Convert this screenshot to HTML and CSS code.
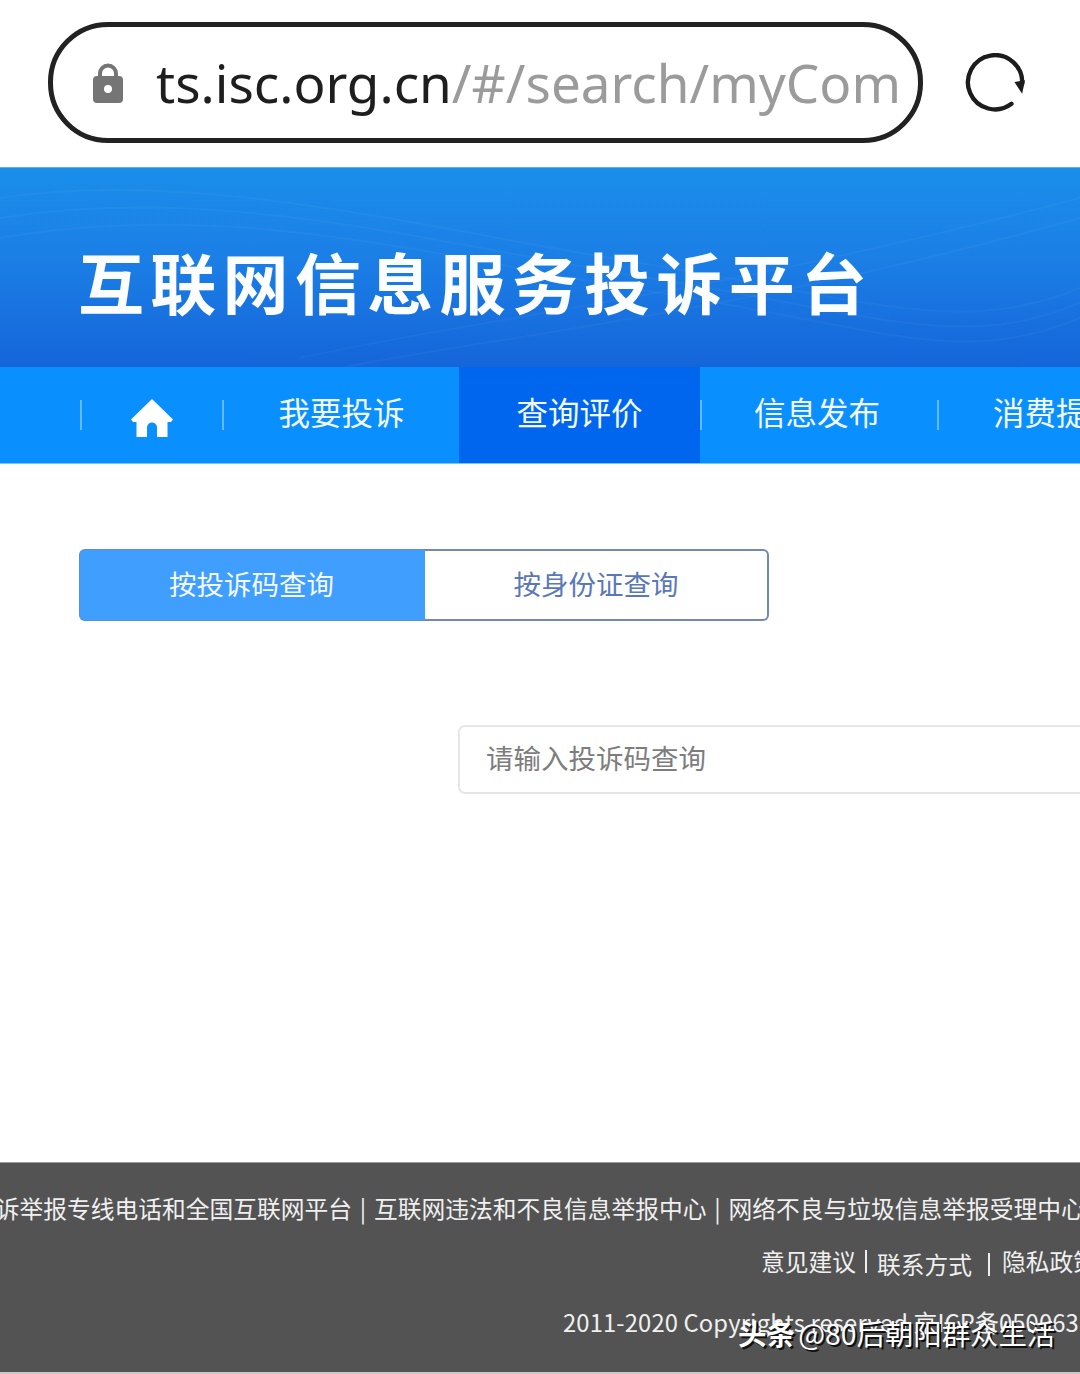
FILE: index.html
```html
<!DOCTYPE html>
<html lang="zh-CN">
<head>
<meta charset="utf-8">
<title>互联网信息服务投诉平台</title>
<link rel="stylesheet" href="styles.css">
</head>
<body>
<div class="page">
  <header class="browser">
    <div class="address">
      <svg class="lock" viewBox="0 0 30 40" aria-hidden="true">
        <path class="lock-arc" d="M7 17V10.500a8 8 0 0 1 16 0V17"/>
        <path class="lock-body" fill-rule="evenodd" d="M4 13h22a4 4 0 0 1 4 4v19a4 4 0 0 1-4 4H4a4 4 0 0 1-4-4V17a4 4 0 0 1 4-4zM15 22a4 4 0 1 0 0 8 4 4 0 0 0 0-8z"/>
      </svg>
      <div class="url"><span class="host">ts.isc.org.cn</span><span class="path">/#/search/myCom</span></div>
    </div>
    <svg class="reload" viewBox="0 0 64 64" aria-hidden="true">
      <path class="reload-arc" d="M49 52.500A28 28 0 1 1 60 32"/>
      <path class="reload-head" d="M52 30L63 28L60 42Z"/>
    </svg>
  </header>

  <section class="banner">
    <svg class="waves" viewBox="0 0 1080 200" preserveAspectRatio="none" aria-hidden="true">
      <path d="M0 30C200 0 420 60 640 95S960 170 1080 120"/>
      <path d="M0 50C220 15 430 75 650 110S960 185 1080 135"/>
      <path d="M0 70C240 30 440 90 660 125S960 200 1080 150"/>
      <path d="M300 190C480 150 700 130 1080 30"/>
      <path d="M340 200C520 165 740 145 1080 50"/>
    </svg>
    <h1 class="title">互联网信息服务投诉平台</h1>
  </section>

  <nav class="nav">
    <span class="sep"></span>
    <a class="nav-home">
      <svg class="home" viewBox="0 0 42 38" aria-hidden="true">
        <path d="M21 0L42 20.500L40 23H36.500V38H26V28.500a5 5 0 0 0-10 0V38H5.500V23H2L0 20.500Z"/>
      </svg>
    </a>
    <span class="sep"></span>
    <a class="nav-item">我要投诉</a>
    <a class="nav-item nav-active">查询评价</a>
    <span class="sep"></span>
    <a class="nav-item nav-wide">信息发布</a>
    <span class="sep"></span>
    <a class="nav-last">消费提示</a>
  </nav>

  <main class="content">
    <div class="tabs">
      <div class="tab tab-on">按投诉码查询</div>
      <div class="tab tab-off">按身份证查询</div>
    </div>
    <div class="search">请输入投诉码查询</div>
  </main>

  <footer class="footer">
    <div class="foot-links">投诉举报专线电话和全国互联网平台 | 互联网违法和不良信息举报中心 | 网络不良与垃圾信息举报受理中心</div>
    <div class="foot-sub">
      <span>意见建议</span><i class="bar"></i>
      <span class="low">联系方式</span><i class="bar bar-low"></i>
      <span>隐私政策</span>
    </div>
    <div class="foot-copy">2011-2020 Copyrights reserved 京ICP备050063号</div>
    <div class="mark"><b>头条</b> @80后朝阳群众生活</div>
  </footer>
</div>
</body>
</html>
```

FILE: styles.css
```css
* { box-sizing: border-box; }
html, body { margin: 0; padding: 0; background: #fff; }
.page {
  width: 1080px;
  height: 1374px;
  overflow: hidden;
  display: flex;
  flex-direction: column;
  font-family: "Noto Sans CJK SC", "Noto Sans", sans-serif;
}

.browser {
  height: 167px;
  flex: none;
  padding: 22px 0 0 48px;
  display: flex;
  align-items: flex-start;
  background: #fff;
}
.address {
  width: 875px;
  height: 121px;
  border: 5px solid #222;
  border-radius: 60px;
  display: flex;
  align-items: center;
  padding-left: 40px;
  overflow: hidden;
}
.lock { width: 30px; height: 40px; flex: none; }
.lock-arc { fill: none; stroke: #757575; stroke-width: 4; }
.lock-body { fill: #757575; }
.url {
  margin-left: 33px;
  width: 744px;
  overflow: hidden;
  white-space: nowrap;
  font-family: "Noto Sans", sans-serif;
  font-size: 53px;
  line-height: 72px;
}
.host { color: #1e1e1e; }
.path { color: #9b9b9b; }
.reload { width: 62px; height: 62px; margin: 31px 0 0 41px; flex: none; }
.reload-arc { fill: none; stroke: #1c1c1c; stroke-width: 4.500; stroke-linecap: round; }
.reload-head { fill: #1c1c1c; }

.banner {
  position: relative;
  height: 200px;
  flex: none;
  border-top: 1px solid #58b4f0;
  background: linear-gradient(180deg, #1a8eea 0%, #1b7fe6 45%, #1565d9 100%);
  padding: 66px 0 0 78px;
  overflow: hidden;
}
.waves { position: absolute; left: 0; top: 0; width: 1080px; height: 200px; }
.waves path { fill: none; stroke: #ffffff; stroke-opacity: .035; stroke-width: 2; }
.title {
  position: relative;
  margin: 0;
  font-size: 66px;
  line-height: 92px;
  font-weight: 700;
  letter-spacing: 6.300px;
  color: #fbfdff;
  white-space: nowrap;
}

.nav {
  height: 97px;
  flex: none;
  display: flex;
  align-items: stretch;
  padding-left: 80px;
  background: #0a8fff;
  border-bottom: 1px solid #76c6ff;
  color: #f2f9ff;
  font-size: 31.500px;
  white-space: nowrap;
}
.sep {
  width: 2px;
  height: 30px;
  flex: none;
  align-self: center;
  background: #62bcff;
}
.nav-home { width: 140px; display: flex; align-items: center; justify-content: center; flex: none; padding-top: 6px; }
.home { width: 42px; height: 38px; fill: #fff; }
.nav-item { width: 235px; flex: none; display: flex; align-items: center; justify-content: center; padding-bottom: 9px; }
.nav-active { width: 241px; background: #0066ee; }
.nav-wide { width: 235px; padding-right: 5px; }
.nav-last { flex: none; padding: 0 0 9px 54px; display: flex; align-items: center; }

.content {
  flex: 1;
  padding: 85px 0 0 79px;
  overflow: hidden;
}
.tabs { display: flex; width: 690px; height: 72px; }
.tab {
  display: flex;
  align-items: center;
  justify-content: center;
  padding-bottom: 5px;
  font-size: 27.500px;
}
.tab-on {
  width: 346px;
  padding-right: 2px;
  background: #409eff;
  color: #f4faff;
  border-radius: 6px 0 0 6px;
  border: 1px solid #5d8fd0;
  border-right: 0;
}
.tab-off {
  width: 344px;
  background: #fff;
  color: #5a78b8;
  border: 2px solid #7488b6;
  border-left: 0;
  border-radius: 0 6px 6px 0;
}
.search {
  width: 800px;
  height: 69px;
  margin: 104px 0 0 379px;
  padding: 0 0 5px 26px;
  display: flex;
  align-items: center;
  border: 2px solid #e6e6e6;
  border-radius: 7px;
  background: #fff;
  color: #7d7d7d;
  font-size: 27.500px;
}

.footer {
  position: relative;
  height: 212px;
  flex: none;
  background: #535353;
  border-top: 1px solid #9a9a9a;
  border-bottom: 2px solid #c9c9c9;
  color: #f0f0f0;
  font-size: 23.750px;
  white-space: nowrap;
  overflow: hidden;
}
.foot-links { margin: 27px 0 0 -28px; line-height: 36px; word-spacing: 2.500px; }
.foot-sub {
  margin: 17px 0 0 761px;
  height: 36px;
  display: flex;
  align-items: center;
  line-height: 36px;
}
.foot-sub .low { position: relative; top: 3px; }
.bar { width: 2px; height: 23px; flex: none; margin: 0 10px 0 9px; background: #eee; }
.bar-low { margin: 6px 12px 0 16px; }
.foot-copy { margin: 25px 0 0 563px; line-height: 36px; letter-spacing: .15px; }
.mark {
  position: absolute;
  left: 738px;
  top: 150px;
  font-size: 28.400px;
  line-height: 40px;
  word-spacing: -3px;
  color: #fff;
  text-shadow: 2px 2px 0 #111;
}
.mark b { font-weight: 700; }
```
